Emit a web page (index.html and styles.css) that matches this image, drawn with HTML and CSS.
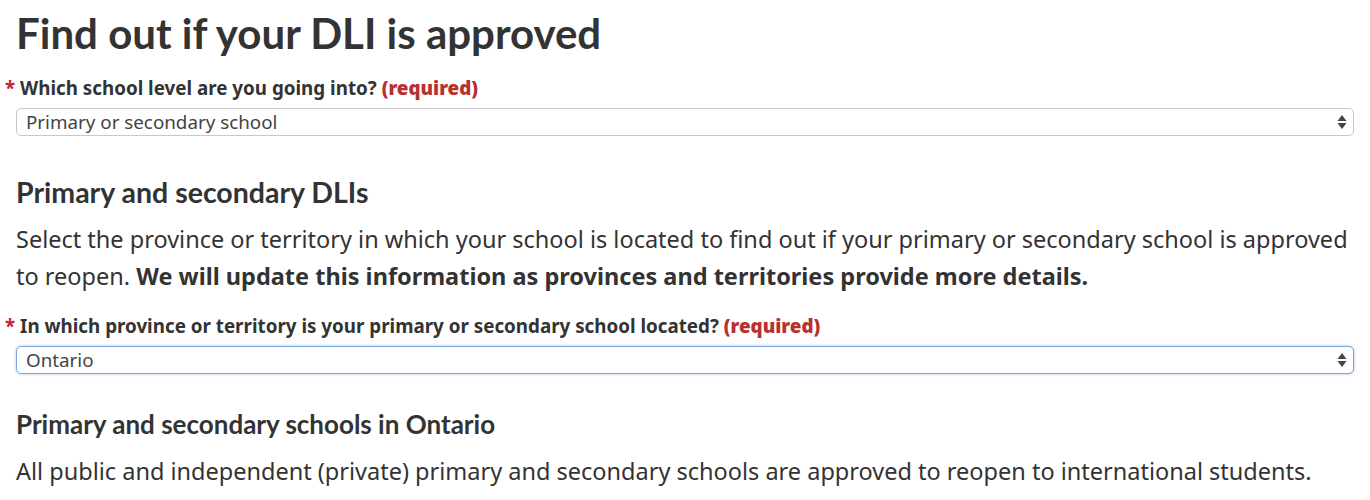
FILE: index.html
```html
<!DOCTYPE html>
<html lang="en">
<head>
<meta charset="utf-8">
<title>Find out if your DLI is approved</title>
<link rel="stylesheet" href="styles.css">
</head>
<body>
<main class="page">
  <h1 class="title">Find out if your DLI is approved</h1>
  <div class="field">
    <label class="label" for="level"><span class="star">*</span> Which school level are you going into? <strong class="req">(required)</strong></label>
    <div class="select">
      <span class="select-text">Primary or secondary school</span>
      <svg class="arrows" width="10" height="16" viewBox="0 0 10 16"><path d="M5 1 L9.5 7 H0.5 Z M5 15 L9.5 9 H0.5 Z" fill="#444"/></svg>
    </div>
  </div>
  <h2 class="h2">Primary and secondary DLIs</h2>
  <p class="text intro">Select the province or territory in which your school is located to find out if your primary or secondary school is approved to reopen. <strong>We will update this information as provinces and territories provide more details.</strong></p>
  <div class="field">
    <label class="label" for="prov"><span class="star">*</span> In which province or territory is your primary or secondary school located? <strong class="req">(required)</strong></label>
    <div class="select focus">
      <span class="select-text">Ontario</span>
      <svg class="arrows" width="10" height="16" viewBox="0 0 10 16"><path d="M5 1 L9.5 7 H0.5 Z M5 15 L9.5 9 H0.5 Z" fill="#444"/></svg>
    </div>
  </div>
  <h3 class="h3">Primary and secondary schools in Ontario</h3>
  <p class="text">All public and independent (private) primary and secondary schools are approved to reopen to international students.</p>
</main>
</body>
</html>
```
FILE: styles.css
```css
html, body {
  margin: 0;
  padding: 0;
  background: #fff;
}
body {
  font-family: "Noto Sans", "Open Sans", sans-serif;
  color: #333;
}
.page {
  padding: 8px 16px 0 16px;
}
.title {
  font-family: Lato, sans-serif;
  font-weight: 700;
  font-size: 42px;
  line-height: 50px;
  margin: 0 0 17px 0;
  color: #333;
}
.field {
  display: flex;
  flex-direction: column;
}
.label {
  font-weight: 700;
  font-size: 18.8px;
  line-height: 26px;
  margin-left: -11px;
  margin-bottom: 7px;
}
.star {
  color: #c0272d;
}
.req {
  color: #b8302f;
}
.select {
  display: flex;
  align-items: center;
  justify-content: space-between;
  height: 28px;
  box-sizing: border-box;
  border: 1px solid #c8c8c8;
  border-radius: 5px;
  padding: 0 6px 0 9px;
  font-size: 18.8px;
  color: #444;
  background: #fff;
}
.select.focus {
  border-color: #7ba8d8;
  box-shadow: 0 0 3px rgba(102, 153, 220, 0.6);
}
.h2 {
  font-family: Lato, sans-serif;
  font-weight: 700;
  font-size: 28.5px;
  line-height: 36px;
  margin: 38px 0 11px 0;
}
.text {
  font-size: 23.5px;
  line-height: 37px;
  margin: 0;
}
.intro {
  margin-bottom: 18px;
}
.h3 {
  font-family: Lato, sans-serif;
  font-weight: 700;
  font-size: 26px;
  line-height: 34px;
  margin: 33px 0 12px 0;
}
```
